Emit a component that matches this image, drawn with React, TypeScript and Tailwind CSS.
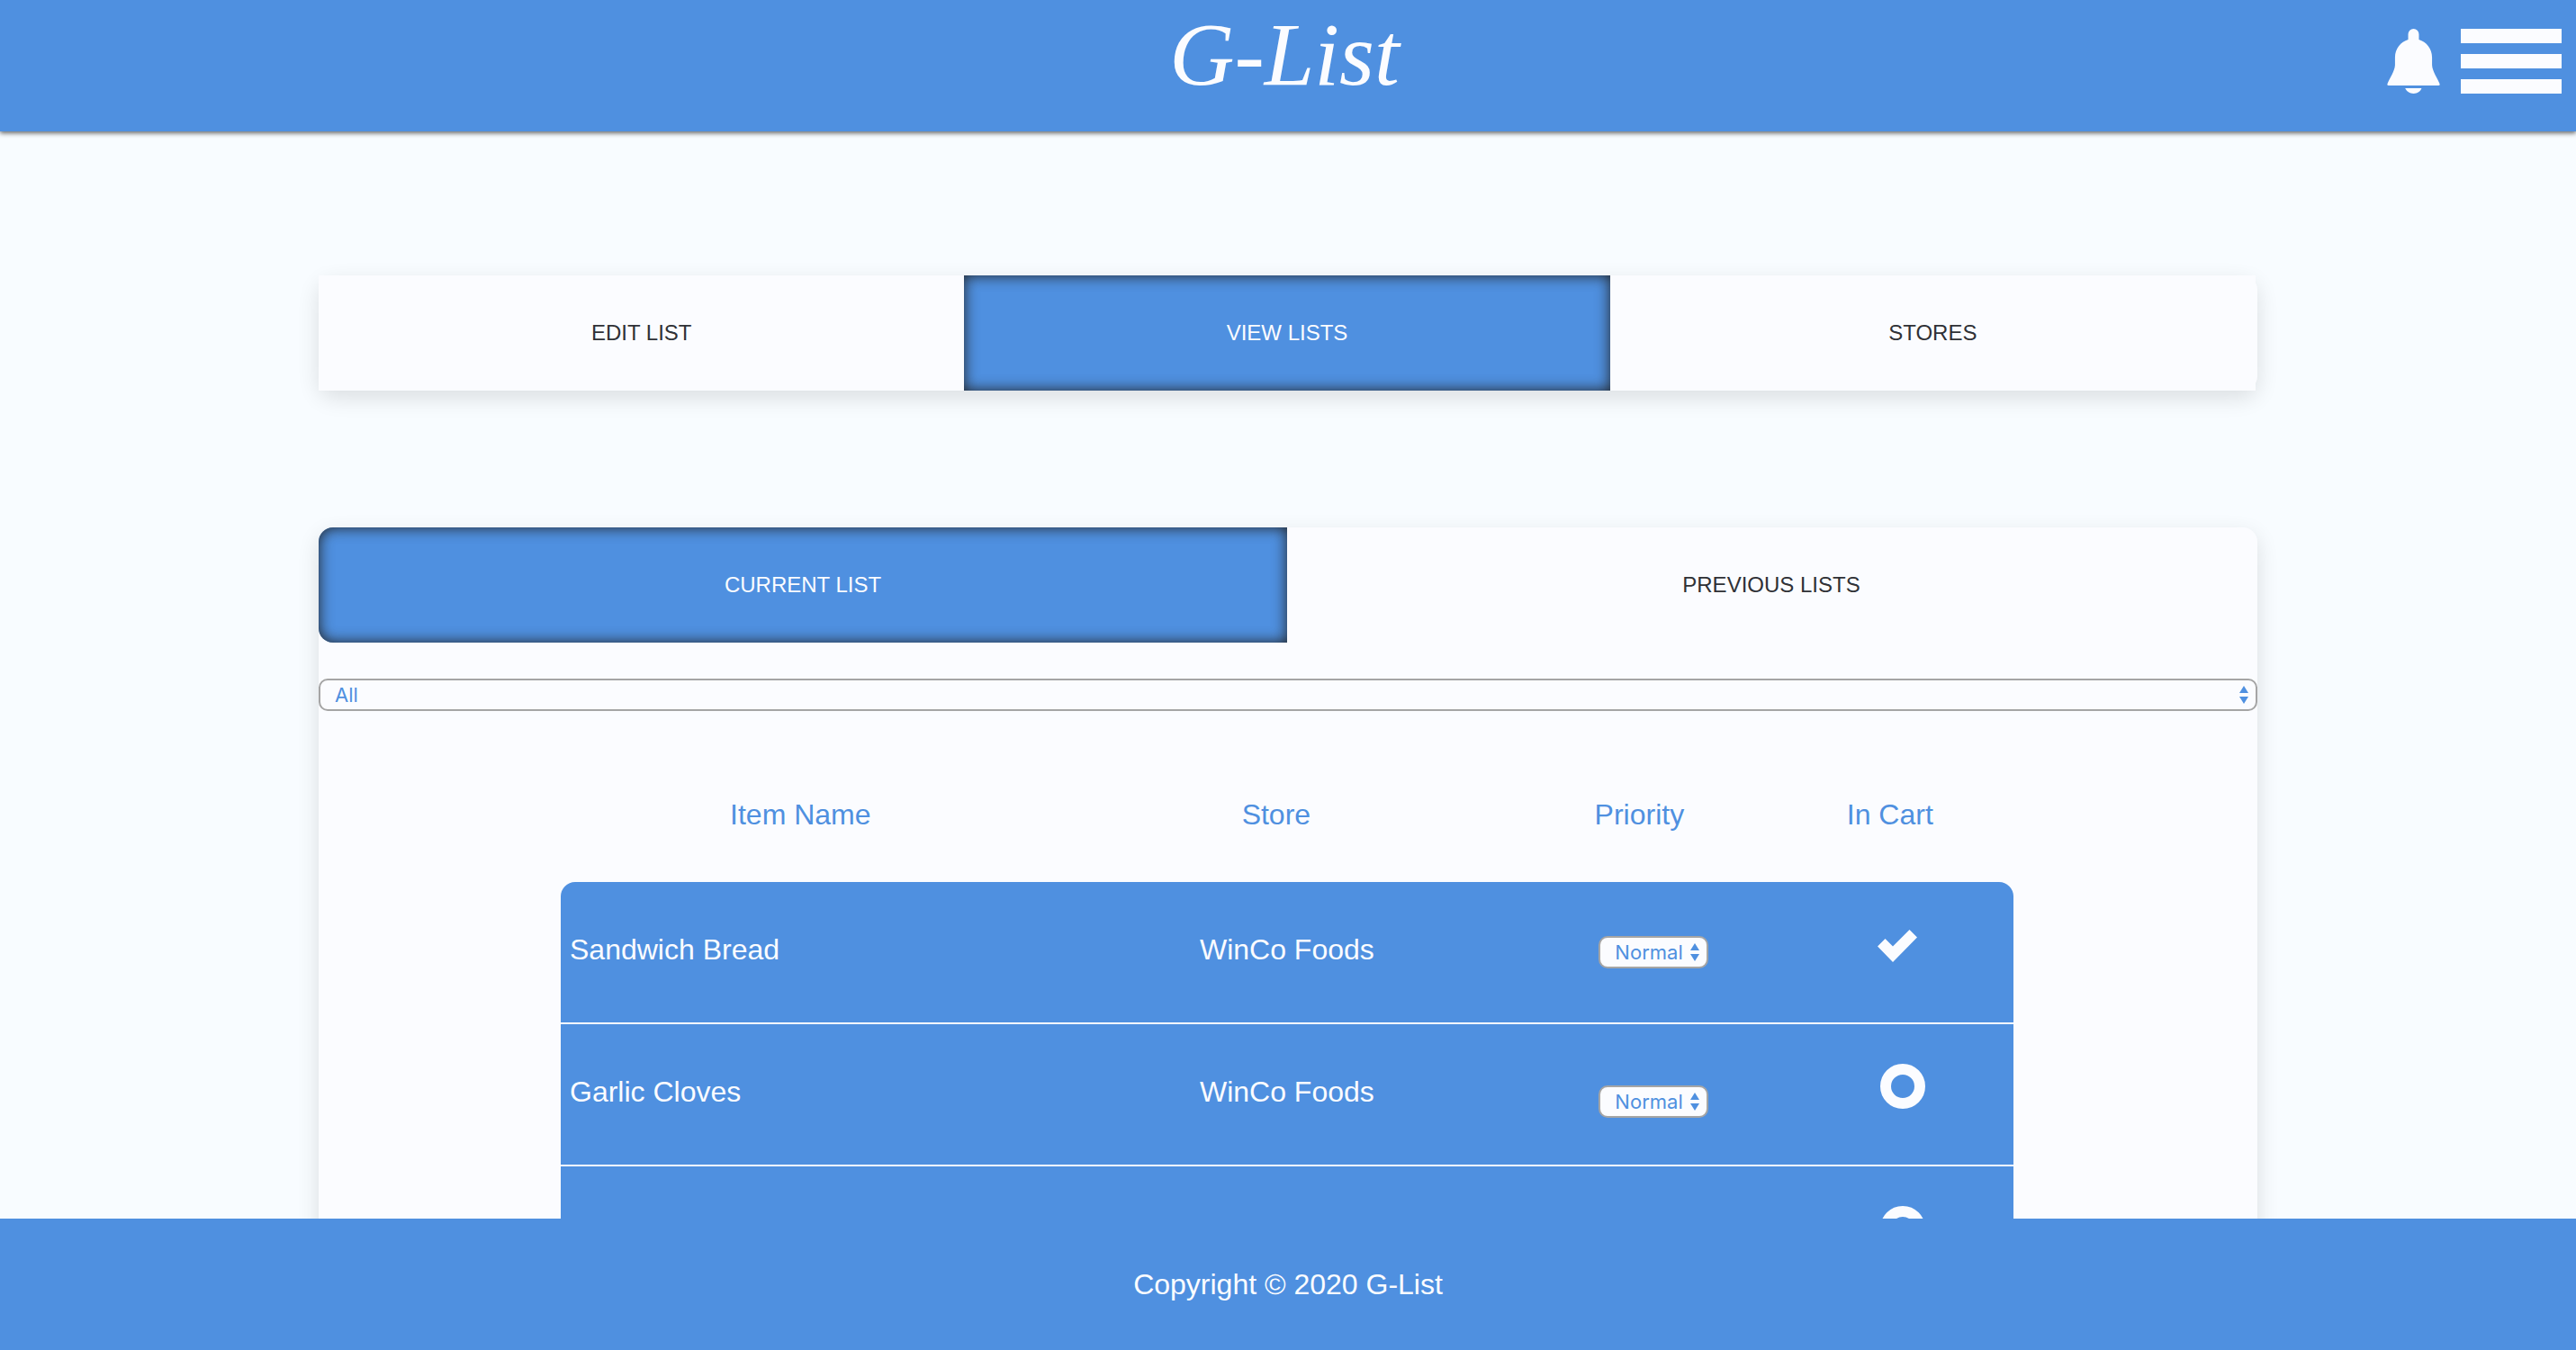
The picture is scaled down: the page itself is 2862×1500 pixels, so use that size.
import React, { useState } from "react";

const CARD =
  "bg-[#fbfcff] shadow-[0_8px_24px_rgba(0,0,0,0.12)] rounded-2xl";

function BellIcon() {
  return (
    <svg viewBox="95 101 176 217" className="h-[72px] w-[59px]" fill="#fbfcff" aria-hidden="true">
      <path d="M165 137V119a18 18 0 0 1 36 0V137C226 145 245 167 245 197V222C246 243 263 266 270 284Q273 291 266 291H100Q93 291 96 284C103 266 120 243 121 222V197C121 167 140 145 165 137Z" />
      <path d="M155 300H210C206 311 196 318 183 318S160 311 155 300Z" />
    </svg>
  );
}

function CheckIcon() {
  return (
    <svg viewBox="0 0 44 36" className="h-9 w-11" fill="#fbfcff" aria-hidden="true">
      <path d="M0 18.5L8.5 10L17 18.5L35.5 0L44 8.5L17 36Z" />
    </svg>
  );
}

function Picker({ label, options }: { label: string; options: string[] }) {
  return (
    <div className="relative">
      <select
        aria-label={label}
        className="block h-9 w-full appearance-none rounded-[10px] border-2 border-[#a5a5a5] bg-[#fbfcff] pl-4 font-['Inter',sans-serif] text-[22px] leading-8 text-[#4f90e0]"
      >
        {options.map((option) => (
          <option key={option}>{option}</option>
        ))}
      </select>
      <svg
        viewBox="0 0 10 20"
        className="pointer-events-none absolute top-2 right-2.5 h-5 w-2.5"
        fill="#4f90e0"
        aria-hidden="true"
      >
        <path d="M0 8L5 0L10 8ZM0 12H10L5 20Z" />
      </svg>
    </div>
  );
}

function Tab({ active, corner = "", children }: { active?: boolean; corner?: string; children: React.ReactNode }) {
  return (
    <button
      type="button"
      aria-pressed={!!active}
      className={`h-32 flex-1 text-2xl uppercase ${corner} ${
        active
          ? "bg-[#4f90e0] text-[#fbfcff] shadow-[inset_0_0_16px_#222]"
          : "bg-[#fbfcff] text-[#2f3136]"
      }`}
    >
      {children}
    </button>
  );
}

type Item = { name: string; store: string; inCart: boolean };

function ItemRow({ item, index }: { item: Item; index: number }) {
  const [inCart, setInCart] = useState(item.inCart);
  const first = index === 0;
  const cell = "h-[158px] border-b-2 border-[#fbfcff] bg-[#4f90e0] align-middle";
  return (
    <tr>
      <td className={`${cell} pb-1.5 pl-2.5 ${first ? "rounded-tl-2xl" : ""}`}>{item.name}</td>
      <td className={`${cell} pb-1.5 pl-6 text-center`}>{item.store}</td>
      <td className={`${cell} pl-8 ${first ? "" : "pt-4"}`}>
        {item.name && (
          <div className="mx-auto w-[122px]">
            <Picker label={`Priority of ${item.name}`} options={["Normal", "High", "Low"]} />
          </div>
        )}
      </td>
      <td className={`${cell} ${inCart ? "pb-3.5 pl-4" : "pb-[18px] pl-7"} ${first ? "rounded-tr-2xl" : ""}`}>
        <button
          type="button"
          aria-label="In cart"
          aria-pressed={inCart}
          onClick={() => setInCart(!inCart)}
          className="mx-auto block"
        >
          {inCart ? <CheckIcon /> : <span className="block size-[50px] rounded-full border-12 border-[#fbfcff]" />}
        </button>
      </td>
    </tr>
  );
}

const ITEMS: Item[] = [
  { name: "Sandwich Bread", store: "WinCo Foods", inCart: true },
  { name: "Garlic Cloves", store: "WinCo Foods", inCart: false },
  { name: "", store: "", inCart: false },
];

export default function App() {
  return (
    <div className="flex h-screen flex-col bg-[#f8fcff] font-['Liberation_Sans',Arial,sans-serif] text-[32px] leading-10">
      <header className="relative z-10 grid h-[146px] shrink-0 grid-cols-[1fr_auto_1fr] items-center bg-[#4f90e0] shadow-[0_2px_5px_rgba(0,0,0,0.6)]">
        <h1 className="col-start-2 pr-2 pb-6 font-['Liberation_Serif',serif] text-[100px] leading-none text-[#fbfcff] italic">
          G-List
        </h1>
        <div className="flex items-center gap-[23px] justify-self-end pr-4 pb-2.5">
          <button type="button" aria-label="Notifications">
            <BellIcon />
          </button>
          <button type="button" aria-label="Menu" className="flex w-28 flex-col gap-3">
            <span className="h-4 bg-[#fbfcff]" />
            <span className="h-4 bg-[#fbfcff]" />
            <span className="h-4 bg-[#fbfcff]" />
          </button>
        </div>
      </header>

      <main className="min-h-0 flex-1 overflow-y-auto pt-40 [scrollbar-width:none]">
        <nav aria-label="Sections" className={`${CARD} mx-auto flex w-[75.26%] pr-0.5`}>
          <Tab>Edit List</Tab>
          <Tab active>View Lists</Tab>
          <Tab>Stores</Tab>
        </nav>

        <section className={`${CARD} mx-auto mt-[152px] w-[75.26%] pb-40`}>
          <div className="flex pr-0.5">
            <Tab active corner="rounded-l-2xl">
              Current List
            </Tab>
            <Tab corner="rounded-r-2xl">Previous Lists</Tab>
          </div>

          <div className="mt-10">
            <Picker label="Store" options={["All", "WinCo Foods"]} />
          </div>

          <div className="pr-0.5">
            <table className="mx-auto mt-10 w-3/4 table-fixed border-separate border-spacing-0 text-[#fbfcff]">
              <thead>
                <tr className="h-[150px] text-[#4f90e0]">
                  <th className="w-[33%] p-0 font-normal">Item Name</th>
                  <th className="w-[32.5%] p-0 font-normal">Store</th>
                  <th className="w-[17.5%] p-0 font-normal">Priority</th>
                  <th className="w-[17%] p-0 font-normal">In Cart</th>
                </tr>
              </thead>
              <tbody>
                {ITEMS.map((item, index) => (
                  <ItemRow key={index} item={item} index={index} />
                ))}
              </tbody>
            </table>
          </div>
        </section>
      </main>

      <footer className="relative z-10 flex h-[146px] shrink-0 items-center justify-center bg-[#4f90e0] text-[#fbfcff]">
        <p>Copyright © 2020 G-List</p>
      </footer>
    </div>
  );
}
